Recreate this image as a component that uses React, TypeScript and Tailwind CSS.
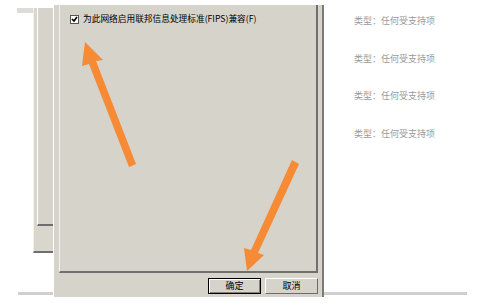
import React from 'react';

const cjk = { fontFamily: '"Noto Sans CJK SC", "Noto Sans", sans-serif' };

function Arrows() {
  // two orange pointer arrows drawn over the screenshot
  return (
    <svg className="absolute inset-0 pointer-events-none" width={491} height={308} viewBox="0 0 491 308">
      <g fill="#f68a35">
        <polygon points="85,42 103,60 96,61 136,164 129,167 89,64 82,66" />
        <polygon points="247,271 244,248 251,250 292,160 299,164 258,253 264,255" />
      </g>
    </svg>
  );
}

function Button({ label, primary }: { label: string; primary?: boolean }) {
  return (
    <div
      className={`w-[53px] h-[16px] flex items-center justify-center text-[9px] text-black ${
        primary
          ? 'border border-black shadow-[inset_1px_1px_0_#fff,inset_-1px_-1px_0_#808080]'
          : 'border-t border-l border-white border-r border-b border-r-[#6b6b6b] border-b-[#6b6b6b]'
      } bg-[#d6d3ca]`}
      style={cjk}
    >
      {label}
    </div>
  );
}

export default function App() {
  return (
    <div className="relative w-[491px] h-[308px] bg-white overflow-hidden" style={cjk}>
      {/* page separator line behind the dialogs */}
      <div className="absolute left-[18px] top-[292px] w-[449px] h-[3px] bg-[#cfcfcf]" />
      <div className="absolute left-[17px] top-[8px] w-[16px] h-[5px] bg-[#dedcd8]" />

      <div className="relative flex items-start">
        <div className="w-[33px] shrink-0" />

        {/* window behind */}
        <div className="mt-[8px] w-[20px] h-[245px] shrink-0 bg-[#d9d6ce] border-l border-l-[#f2f1ec] border-b-2 border-b-[#6e6e6e] pl-[3px]">
          <div className="h-[218px] border-l border-l-[#ffffff] border-b-2 border-b-[#6e6e6e] bg-[#d6d3cb]" />
        </div>

        {/* dialog */}
        <div className="mt-[5px] w-[271px] h-[292px] shrink-0 bg-[#d6d3ca] border-l border-l-white border-r-2 border-r-[#7a7a7a] flex flex-col pl-[5px] pr-[4px]">
          <div className="h-[268px] border-l border-l-[#f4f3ef] border-r-2 border-r-[#6f6f6f] border-b-2 border-b-[#6f6f6f] pl-[10px] pt-[10px]">
            <div className="flex items-center gap-[4px]">
              <div className="w-[9px] h-[9px] bg-white border border-[#555] flex items-center justify-center">
                <svg width="7" height="7" viewBox="0 0 7 7">
                  <path d="M1 3 L3 5 L6 1" stroke="#000" strokeWidth="1.6" fill="none" />
                </svg>
              </div>
              <span className="text-[8.7px] leading-none text-black whitespace-nowrap">
                为此网络启用联邦信息处理标准(FIPS)兼容(F)
              </span>
            </div>
          </div>
          <div className="flex justify-end gap-[4px] pt-[5px]">
            <Button label="确定" primary />
            <Button label="取消" />
          </div>
        </div>

        {/* right column */}
        <div className="pl-[30px] pt-[16px] flex flex-col gap-[28.5px]">
          {[0, 1, 2, 3].map((i) => (
            <div key={i} className="text-[9px] leading-[9px] text-[#9a9a9a] whitespace-nowrap">
              类型：任何受支持项
            </div>
          ))}
        </div>
      </div>

      <Arrows />
    </div>
  );
}
